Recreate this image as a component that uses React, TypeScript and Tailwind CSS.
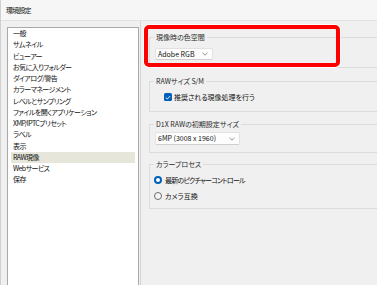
import React from "react";

const ITEMS = [
  "一般",
  "サムネイル",
  "ビューアー",
  "お気に入りフォルダー",
  "ダイアログ/警告",
  "カラーマネージメント",
  "レベルとサンプリング",
  "ファイルを開くアプリケーション",
  "XMP/IPTCプリセット",
  "ラベル",
  "表示",
  "RAW現像",
  "Webサービス",
  "保存",
];

function Group({ label, className, children }: { label: string; className?: string; children: React.ReactNode }) {
  return (
    <fieldset className={`border border-[#dcdcdc] w-[240px] ${className || ""}`}>
      <legend className="ml-[4px] px-[2px] text-[7px] leading-[10px] text-[#2a2a2a]">{label}</legend>
      {children}
    </fieldset>
  );
}

function Combo({ value, width, height }: { value: string; width: string; height: string }) {
  return (
    <div
      className={`ml-[5px] ${width} ${height} flex items-center justify-between bg-[#fdfdfd] border border-[#e2e2e2] border-b-[#cfcfcf] rounded-[2px] pl-[2px] pr-[4px] text-[7px] text-[#111]`}
    >
      <span>{value}</span>
      <svg width="6" height="4" viewBox="0 0 6 4" fill="none">
        <path d="M0.5 0.8 L3 3.2 L5.5 0.8" stroke="#777" strokeWidth="0.8" />
      </svg>
    </div>
  );
}

function Radio({ checked, label, tight }: { checked?: boolean; label: string; tight?: boolean }) {
  return (
    <div className="flex items-center gap-[3px] h-[10px] ml-[4px] text-[7px] text-[#111]">
      {checked ? (
        <span className="w-[8px] h-[8px] rounded-full bg-[#005fb8] flex items-center justify-center">
          <span className="w-[3.5px] h-[3.5px] rounded-full bg-white" />
        </span>
      ) : (
        <span className="w-[8px] h-[8px] rounded-full border border-[#6a6a6a] bg-[#f6f6f6]" />
      )}
      <span className={tight ? "tracking-[-0.8px]" : ""}>{label}</span>
    </div>
  );
}

export default function App() {
  return (
    <div className="relative w-[377px] h-[285px] overflow-hidden bg-[#f0f0f0] border-l border-[#cfcfcf] font-['Noto_Sans_CJK_JP','Liberation_Sans',sans-serif] [font-feature-settings:'palt']">
      <div className="h-[21px] flex items-center pl-[5px] bg-[#f6f6f6] border-b border-[#e2e2e2] text-[7px] tracking-[-0.8px] text-[#111]">
        環境設定
      </div>

      <div className="flex">
        <div className="shrink-0 mt-[6px] ml-[6px] w-[132px] h-[270px] bg-white border border-[#a9a9a9] px-[3px]">
          {ITEMS.map((item) => (
            <div
              key={item}
              className={`h-[11.25px] leading-[11.25px] pl-[2px] text-[7px] tracking-[-0.6px] text-[#111] ${
                item === "RAW現像" ? "bg-[#e6e6da]" : ""
              }`}
            >
              {item}
            </div>
          ))}
        </div>

        <div className="shrink-0 ml-[1px] w-[1px] h-[264px] bg-[#d6d6d6]" />

        <div className="shrink-0 pl-[8px] pt-[11px] flex flex-col">
          <Group label="現像時の色空間" className="pt-[6px] pb-[7px]">
            <Combo value="Adobe RGB" width="w-[58px]" height="h-[12px]" />
          </Group>

          <Group label="RAWサイズ S/M" className="mt-[8px] pt-[6px] pb-[9px]">
            <div className="flex items-center gap-[2px] h-[10px] ml-[14px] text-[7px] text-[#111]">
              <span className="w-[8px] h-[8px] rounded-[1.5px] bg-[#005fb8] flex items-center justify-center">
                <svg width="6" height="5" viewBox="0 0 6 5" fill="none">
                  <path d="M0.8 2.6 L2.3 4 L5.2 1" stroke="white" strokeWidth="0.9" />
                </svg>
              </span>
              <span>推奨される現像処理を行う</span>
            </div>
          </Group>

          <Group label="D1X RAWの初期設定サイズ" className="mt-[7px] pt-[3px] pb-[7px]">
            <Combo value="6MP (3008 x 1960)" width="w-[85px]" height="h-[13px]" />
          </Group>

          <Group label="カラープロセス" className="mt-[6px] pt-[6px] pb-[7px]">
            <Radio checked tight label="最新のピクチャーコントロール" />
            <div className="h-[6px]" />
            <Radio label="カメラ互換" />
          </Group>
        </div>
      </div>

      <div className="absolute left-[143px] top-[25px] w-[196px] h-[42px] border-[4px] border-[#ff0000] rounded-[5px] shadow-[0_0_0_1px_#ffffff]" />
    </div>
  );
}
